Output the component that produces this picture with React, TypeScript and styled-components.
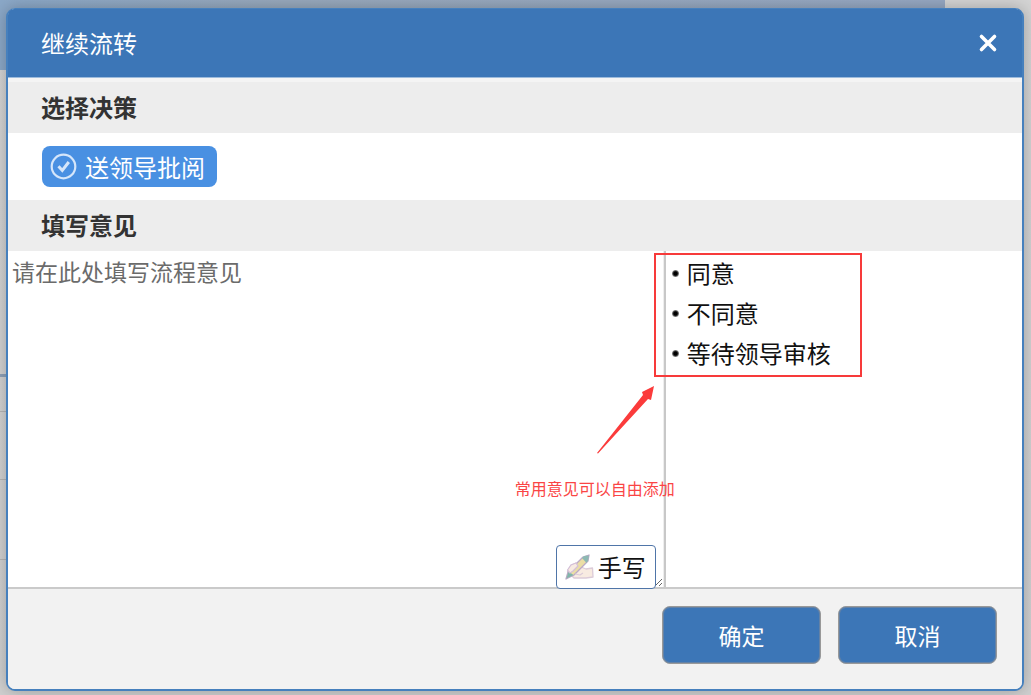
import React from 'react';
import styled, { createGlobalStyle } from 'styled-components';

const GlobalStyle = createGlobalStyle`
  *, *::before, *::after { box-sizing: border-box; }
  body {
    margin: 0;
    font-family: "Noto Sans CJK SC", "Noto Sans", sans-serif;
    font-size: 24px;
    line-height: 32px;
    color: #111;
  }
  button, textarea { font-family: inherit; }
`;

const Page = styled.div`
  display: flex;
  min-height: 100vh;
  padding: 8px 7px 5px 6px;
  background:
    linear-gradient(#8ea1b8, #8ea1b8) 0 374px / 50% 3px no-repeat,
    linear-gradient(#b5b5b5, #b5b5b5) 0 411px / 50% 1px no-repeat,
    linear-gradient(#b5b5b5, #b5b5b5) 0 479px / 50% 1px no-repeat,
    linear-gradient(#b5b5b5, #b5b5b5) 0 559px / 50% 1px no-repeat,
    linear-gradient(90deg, #8ba8c8, #98a9bd 30%, #96a8c3) 0 0 / calc(100% - 86px) 70px no-repeat,
    linear-gradient(#d4d4d4, #d0d0d0);
`;

const Dialog = styled.section`
  display: flex;
  flex: 1;
  flex-direction: column;
  min-width: 0;
  border: 2px solid #4680bd;
  border-top-width: 1px;
  border-radius: 9px;
  background: #fff;
  box-shadow: 0 0 16px rgba(0, 0, 0, 0.25);
`;

const Header = styled.header`
  display: flex;
  flex: none;
  align-items: center;
  justify-content: space-between;
  height: 69px;
  padding: 0 22px 0 33px;
  border-bottom: 1px solid #9dbbdc;
  border-radius: 6px 6px 0 0;
  background: #3c76b7;
  color: #fff;
`;

const Title = styled.h1`
  margin: 0;
  font-size: 24px;
  font-weight: 400;
`;

const CloseButton = styled.button`
  display: flex;
  padding: 0;
  border: 0;
  background: none;
  color: #fff;
  cursor: pointer;
`;

const SectionTitle = styled.h2<{ $first?: boolean }>`
  flex: none;
  margin: 0;
  padding: 9px 33px 10px;
  border-top: ${p => (p.$first ? '4px solid #f4f4f4' : '0')};
  background: #ededed;
  color: #333;
  font-size: 24px;
  font-weight: 700;
`;

const DecisionRow = styled.div`
  display: flex;
  flex: none;
  padding: 13px 34px;
`;

const DecisionButton = styled.button`
  display: flex;
  align-items: center;
  gap: 8px;
  height: 41px;
  padding: 0 12px 0 8px;
  border: 0;
  border-radius: 8px;
  background: #4990e2;
  color: #fff;
  font-size: 24px;
  line-height: 32px;
`;

const OpinionArea = styled.div`
  display: flex;
  flex: 1;
  min-height: 336px;
`;

const Editor = styled.div`
  position: relative;
  display: flex;
  flex: 657 1 0;
  min-width: 0;
  border-right: 2px solid #c8c8c8;
`;

const OpinionInput = styled.textarea`
  flex: 1;
  min-width: 0;
  margin: 0;
  padding: 4px;
  border: 0;
  border-right: 1px solid #eee;
  outline: 0;
  background: #fff;
  color: #111;
  font-size: 23px;
  line-height: 32px;
  resize: vertical;

  &::placeholder { color: #6b6b6b; opacity: 1; }
`;

const HandwriteButton = styled.button`
  position: absolute;
  right: 8px;
  bottom: -2px;
  z-index: 1;
  display: flex;
  align-items: center;
  gap: 4px;
  height: 44px;
  padding: 0 9px 0 8px;
  border: 1px solid #4f75a8;
  border-radius: 4px;
  background: #fff;
  color: #111;
  font-size: 24px;
  line-height: 32px;
`;

const Suggestions = styled.div`
  position: relative;
  flex: 357 1 0;
  min-width: 0;
`;

const SuggestionList = styled.ul`
  margin: 0;
  padding: 2px 0 0 6px;
  list-style: none;
`;

const Suggestion = styled.li`
  display: flex;
  align-items: center;
  gap: 8px;
  height: 40px;

  &::before {
    width: 7px;
    height: 7px;
    border-radius: 50%;
    background: radial-gradient(#000 35%, #aaa 75%);
    content: '';
  }
`;

const Highlight = styled.div`
  position: absolute;
  top: 2px;
  left: -12px;
  width: 208px;
  height: 124px;
  border: 2px solid #f73a3a;
  pointer-events: none;
`;

const Arrow = styled.svg`
  position: absolute;
  top: 134px;
  left: -70px;
  pointer-events: none;
`;

const Note = styled.p`
  position: absolute;
  top: 225px;
  left: -151px;
  margin: 0;
  color: #fa4545;
  font-size: 16px;
  line-height: 24px;
  white-space: nowrap;
  pointer-events: none;
`;

const Footer = styled.footer`
  display: flex;
  flex: none;
  gap: 17px;
  justify-content: flex-end;
  padding: 17px 25px 25px;
  border-top: 2px solid #cacaca;
  border-radius: 0 0 7px 7px;
  background: #f2f2f2;
`;

const ActionButton = styled.button`
  width: 159px;
  height: 58px;
  padding: 0;
  border: 1px solid #999;
  border-radius: 8px;
  background: #3c76b7;
  box-shadow: inset 0 0 0 1px #6482a6;
  color: #fff;
  font-size: 23px;
  line-height: 32px;
`;

const suggestions = ['同意', '不同意', '等待领导审核'];

function CheckIcon() {
  return (
    <svg width="27" height="27" viewBox="0 0 27 27" fill="none" stroke="#d5e6fa" aria-hidden="true">
      <circle cx="13.5" cy="13.5" r="11.8" strokeWidth="2.2" />
      <path d="M8.5 13.2l3.8 4.3 6.5-8.5" strokeWidth="3" />
    </svg>
  );
}

function HandIcon() {
  return (
    <svg width="29" height="26" viewBox="0 0 29 26" strokeLinejoin="round" aria-hidden="true">
      <path d="M2.5 17L6 11L11 9L16 13L21 15L27.5 14L28 23L21 24L9 24L6 21Z" fill="#f8ebe1" stroke="#dccbd8" strokeWidth="1.3" />
      <path d="M1 25L3 18L18 3L24 1L23 7L9 21Z" fill="#ebdea5" stroke="#bba9c6" strokeWidth="1.3" />
      <path d="M17 4L19 2L24 1.5L23 6.5L21.5 9Z" fill="#8db9b3" />
      <path d="M1.5 24.5L3.5 17.5L8.5 21Z" fill="#80b5aa" />
      <path d="M2.5 16L6 11L11 9L13 12L8 17L5 19Z" fill="#f8ebe1" stroke="#d4bfd8" strokeWidth="1.2" />
      <path d="M10 20L15 21L18 19" fill="none" stroke="#dccbd8" strokeWidth="1.2" />
    </svg>
  );
}

export default function App() {
  return (
    <>
      <GlobalStyle />
      <Page>
        <Dialog role="dialog" aria-labelledby="dialog-title">
          <Header>
            <Title id="dialog-title">继续流转</Title>
            <CloseButton type="button" aria-label="关闭">
              <svg width="24" height="24" viewBox="0 0 24 24" fill="none" stroke="currentColor" strokeWidth="3.6" strokeLinecap="round">
                <path d="M5.5 5.5l13 13M18.5 5.5l-13 13" />
              </svg>
            </CloseButton>
          </Header>
          <SectionTitle $first>选择决策</SectionTitle>
          <DecisionRow>
            <DecisionButton type="button"><CheckIcon />送领导批阅</DecisionButton>
          </DecisionRow>
          <SectionTitle>填写意见</SectionTitle>
          <OpinionArea>
            <Editor>
              <OpinionInput aria-label="填写意见" placeholder="请在此处填写流程意见" />
              <HandwriteButton type="button"><HandIcon />手写</HandwriteButton>
            </Editor>
            <Suggestions>
              <SuggestionList>
                {suggestions.map(text => <Suggestion key={text}>{text}</Suggestion>)}
              </SuggestionList>
              <Highlight />
              <Arrow width="60" height="70" viewBox="0 0 60 70" aria-hidden="true">
                <path d="M1 68L47 10L46 7L58 1L55 15L52 14L2 68.5Z" fill="#fb3b3b" />
              </Arrow>
              <Note>常用意见可以自由添加</Note>
            </Suggestions>
          </OpinionArea>
          <Footer>
            <ActionButton type="button">确定</ActionButton>
            <ActionButton type="button">取消</ActionButton>
          </Footer>
        </Dialog>
      </Page>
    </>
  );
}
